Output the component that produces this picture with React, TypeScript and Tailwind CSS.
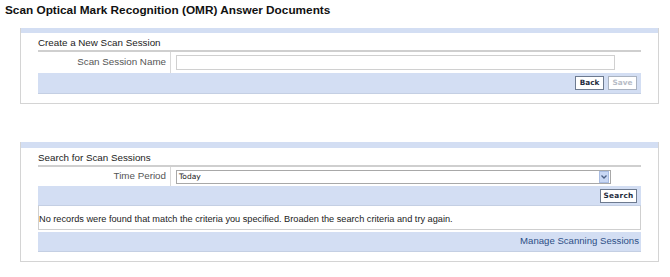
export default function App() {
  return (
    <div className="w-[670px] h-[277px] bg-white font-['Liberation_Sans',Arial,sans-serif] text-[#333]">
      <h1 className="pl-[5px] pt-[4px] h-[28px] text-[11.8px] font-bold text-[#111] leading-[13px]">
        Scan Optical Mark Recognition (OMR) Answer Documents
      </h1>

      {/* Create panel */}
      <div className="ml-[20px] w-[639px] border border-[#d4d4d4] border-t-0">
        <div className="h-[5px] bg-[#d3def3]" />
        <div className="px-[17px] pb-[9px]">
          <div className="h-[19px] flex items-end border-b-2 border-[#cfcfcf] text-[9.8px] leading-[12px] pb-[1px] text-[#222]">
            Create a New Scan Session
          </div>
          <div className="h-[21px] flex items-stretch">
            <div className="w-[133px] border-r border-[#d8d8d8] flex items-center justify-end pr-[4px] text-[9.8px] text-[#555]">
              Scan Session Name
            </div>
            <div className="flex items-center pl-[5px]">
              <div className="w-[439px] h-[15px] border border-[#d0d0d0] bg-white" />
            </div>
          </div>
          <div className="h-[21px] bg-[#d3def3] border-b border-[#c4cfe3] flex items-center justify-end gap-[4px] pr-[4px]">
            <button className="w-[29px] h-[14px] border border-[#6d7a8f] bg-white text-[7.3px] leading-[12px] font-bold font-['DejaVu_Sans',Verdana,sans-serif] text-[#1f2b3d]">
              Back
            </button>
            <button className="w-[29px] h-[14px] border border-[#a9b2c0] bg-white text-[7.3px] leading-[12px] font-bold font-['DejaVu_Sans',Verdana,sans-serif] text-[#b7bcc6]">
              Save
            </button>
          </div>
        </div>
      </div>

      {/* Search panel */}
      <div className="mt-[38px] ml-[20px] w-[639px] border border-[#d4d4d4] border-t-0">
        <div className="h-[6px] bg-[#d3def3]" />
        <div className="px-[17px] pb-[9px]">
          <div className="h-[19px] flex items-end border-b-2 border-[#cfcfcf] text-[9.8px] leading-[12px] pb-[1px] text-[#222]">
            Search for Scan Sessions
          </div>
          <div className="h-[19px] flex items-stretch">
            <div className="w-[133px] border-r border-[#d8d8d8] flex items-center justify-end pr-[4px] text-[9.8px] text-[#555]">
              Time Period
            </div>
            <div className="flex items-center pl-[5px]">
              <div className="w-[435px] h-[14px] border border-[#a8a8a8] bg-white flex items-center justify-between">
                <span className="pl-[2px] text-[7.5px] leading-[10px] font-['DejaVu_Sans',Verdana,sans-serif] text-[#222]">Today</span>
                <span className="w-[10px] h-[12px] mr-[1px] bg-[#c9d8f5] border border-[#a9bde3] flex items-center justify-center">
                  <svg width="6" height="4" viewBox="0 0 6 4">
                    <path d="M0.5 0.5 L3 3 L5.5 0.5" stroke="#4d6185" strokeWidth="1.3" fill="none" />
                  </svg>
                </span>
              </div>
            </div>
          </div>
          <div className="h-[20px] bg-[#d3def3] border-b border-[#c4cfe3] flex items-center justify-end pr-[4px]">
            <button className="w-[37px] h-[14px] border border-[#6d7a8f] bg-white text-[7.3px] leading-[12px] font-bold font-['DejaVu_Sans',Verdana,sans-serif] text-[#1f2b3d] tracking-[0.3px]">
              Search
            </button>
          </div>
          <div className="h-[24px] border-x border-b border-[#cfcfcf] flex items-end pb-[4px] text-[9.2px] leading-[11px] text-[#222]">
            No records were found that match the criteria you specified. Broaden the search criteria and try again.
          </div>
          <div className="mt-[2px] h-[20px] bg-[#d3def3] border-b border-[#c4cfe3] flex items-center justify-end pr-[2px]">
            <span className="text-[9.6px] text-[#2d4e86]">Manage Scanning Sessions</span>
          </div>
        </div>
      </div>
    </div>
  );
}
